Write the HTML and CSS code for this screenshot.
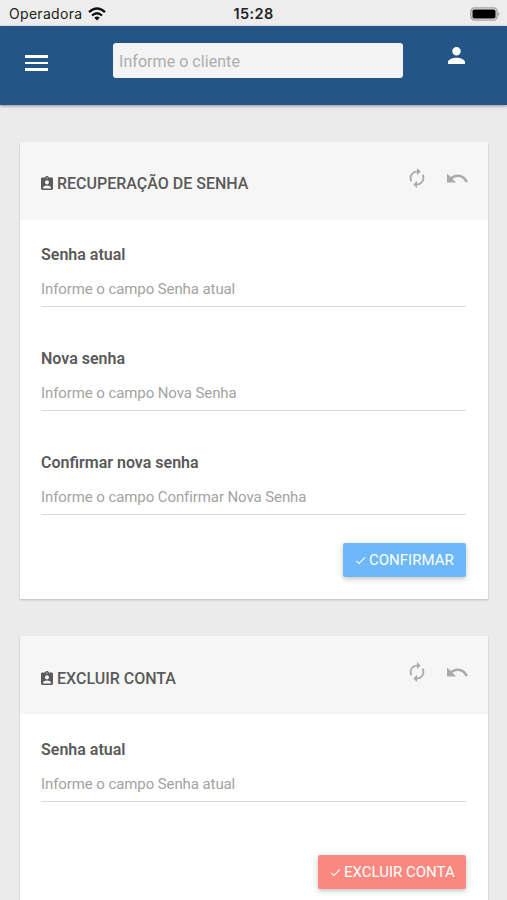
FILE: index.html
```html
<!DOCTYPE html>
<html lang="pt-BR">
<head>
<meta charset="utf-8">
<title>Recuperação de senha</title>
<link rel="stylesheet" href="styles.css">
</head>
<body>
<svg width="0" height="0" class="defs">
  <symbol id="badge" viewBox="3 1 18 20" preserveAspectRatio="none"><path d="M19 3h-4.180C14.400 1.840 13.300 1 12 1s-2.400.84-2.820 2H5c-1.100 0-2 .9-2 2v14c0 1.100.9 2 2 2h14c1.100 0 2-.9 2-2V5c0-1.100-.9-2-2-2zm-7 0c.55 0 1 .45 1 1s-.45 1-1 1-1-.45-1-1 .45-1 1-1zm0 4c1.660 0 3 1.340 3 3s-1.340 3-3 3-3-1.340-3-3 1.340-3 3-3zm6 12H6v-1.400c0-2 4-3.100 6-3.100s6 1.100 6 3.100V19z"/></symbol>
  <symbol id="renew" viewBox="0 0 24 24"><path d="M12 6v3l4-4-4-4v3c-4.420 0-8 3.580-8 8 0 1.570.46 3.030 1.240 4.260L6.700 14.800c-.45-.83-.7-1.790-.7-2.800 0-3.310 2.690-6 6-6zm6.760 1.740L17.300 9.200c.44.840.7 1.790.7 2.800 0 3.310-2.690 6-6 6v-3l-4 4 4 4v-3c4.420 0 8-3.580 8-8 0-1.570-.46-3.030-1.240-4.260z"/></symbol>
  <symbol id="undo" viewBox="2 7 20.500 9"><path d="M12.500 8c-2.650 0-5.050.99-6.900 2.600L2 7v9h9l-3.620-3.620c1.390-1.160 3.160-1.880 5.120-1.880 3.540 0 6.550 2.310 7.600 5.500l2.370-.78C21.080 11.030 17.150 8 12.500 8z"/></symbol>
  <symbol id="check" viewBox="0 0 24 24"><path d="M9 16.170 4.830 12l-1.420 1.410L9 19 21 7l-1.410-1.410z"/></symbol>
</svg>

<div class="status">
  <div class="carrier"><span>Operadora</span>
    <svg class="wifi" viewBox="0 0 18 14" fill="none" stroke="#111" stroke-width="2.300"><path d="M1 5.200Q9-2.200 17 5.200M4 8.500Q9 4 14 8.500"/><path d="M9 13.500 6.200 10.700Q9 8.400 11.800 10.700z" fill="#111" stroke="none"/></svg>
  </div>
  <span class="time">15:28</span>
  <svg class="battery" viewBox="0 0 30 14"><rect x=".9" y=".9" width="26.200" height="12.200" rx="3.500" fill="#e4e4e4" stroke="#a3a3a3" stroke-width="1.400"/><rect x="2.500" y="2.500" width="23" height="9" rx="1.800" fill="#000"/><path d="M28.300 4.800q2.400 2.200 0 4.400z" fill="#a3a3a3"/></svg>
</div>

<header class="topbar">
  <div class="burger"><i></i><i></i><i></i></div>
  <div class="search">Informe o cliente</div>
  <svg class="user" viewBox="4 4 16 16"><path d="M12 12c2.210 0 4-1.790 4-4s-1.790-4-4-4-4 1.790-4 4 1.790 4 4 4zm0 2c-2.670 0-8 1.340-8 4v2h16v-2c0-2.660-5.330-4-8-4z"/></svg>
</header>

<main>
  <section class="card">
    <div class="card-head">
      <svg class="badge"><use href="#badge"/></svg>
      <h2>RECUPERAÇÃO DE SENHA</h2>
      <div class="actions"><svg class="renew"><use href="#renew"/></svg><svg class="undo"><use href="#undo"/></svg></div>
    </div>
    <div class="card-body">
      <div class="field"><label>Senha atual</label><div class="input">Informe o campo Senha atual</div></div>
      <div class="field"><label>Nova senha</label><div class="input">Informe o campo Nova Senha</div></div>
      <div class="field"><label>Confirmar nova senha</label><div class="input">Informe o campo Confirmar Nova Senha</div></div>
      <div class="btn confirm"><svg><use href="#check"/></svg><span>CONFIRMAR</span></div>
    </div>
  </section>

  <section class="card danger">
    <div class="card-head">
      <svg class="badge"><use href="#badge"/></svg>
      <h2>EXCLUIR CONTA</h2>
      <div class="actions"><svg class="renew"><use href="#renew"/></svg><svg class="undo"><use href="#undo"/></svg></div>
    </div>
    <div class="card-body">
      <div class="field"><label>Senha atual</label><div class="input">Informe o campo Senha atual</div></div>
      <div class="btn remove"><svg><use href="#check"/></svg><span>EXCLUIR CONTA</span></div>
    </div>
  </section>
</main>
</body>
</html>
```
FILE: styles.css
```css
* { box-sizing: border-box; }
html { height: 900px; overflow: hidden; }
body {
  margin: 0;
  height: 900px;
  overflow: hidden;
  background: #ebebeb;
  font-family: Roboto, "Liberation Sans", sans-serif;
  color: #5a5a5a;
}
.defs { display: block; }
svg { fill: currentColor; flex: none; }

.status {
  display: grid;
  grid-template-columns: 1fr auto 1fr;
  align-items: center;
  height: 26px;
  padding: 1px 7px 0 9px;
  background: #ededed;
  color: #222;
  font-family: Inter, sans-serif;
  font-size: 14px;
}
.carrier { display: flex; align-items: center; gap: 6px; letter-spacing: 0.300px; }
.wifi { width: 18px; height: 14px; fill: none; }
.time { font-weight: 600; font-size: 14.500px; letter-spacing: 0.400px; margin-left: -2px; }
.battery { width: 30px; height: 14px; justify-self: end; }

.topbar {
  display: flex;
  align-items: flex-start;
  height: 79px;
  padding: 17px 42px 0 25px;
  background: #235686;
  box-shadow: 0 1px 3px rgba(0, 0, 0, 0.400);
}
.burger { display: flex; flex-direction: column; gap: 4px; width: 23px; margin-top: 12px; }
.burger i { height: 2.500px; background: #fff; }
.search {
  width: 290px;
  height: 35px;
  margin-left: 65px;
  padding-left: 6px;
  border-radius: 3px;
  background: #f4f4f4;
  color: #adadad;
  font-size: 16px;
  letter-spacing: 0.050px;
  line-height: 37px;
}
.user { width: 17px; height: 17px; margin: 4px 0 0 auto; color: #fff; }

main { display: flex; flex-direction: column; gap: 37px; padding: 37px 19px 0 20px; }
.card { background: #fff; box-shadow: 0 1px 2px rgba(0, 0, 0, 0.200); }
.card-head {
  display: flex;
  align-items: center;
  height: 78px;
  padding: 6px 20px 0 21px;
  background: #f6f6f6;
}
.badge { width: 12px; height: 14px; margin-right: 4px; margin-top: -3px; }
h2 { margin: 0; font-size: 16px; font-weight: 500; line-height: 20px; }
.actions { display: flex; align-items: center; gap: 19px; margin: -13px 0 0 auto; color: #aaa; }
.renew { width: 22px; height: 22px; }
.undo { width: 21px; height: 10px; }

.card-body { padding: 23px 22px 22px 21px; display: flex; flex-direction: column; }
.field { height: 64px; margin-bottom: 40px; padding-top: 1px; border-bottom: 1px solid #d8d8d8; }
label { display: block; font-size: 16px; font-weight: 600; line-height: 22px; }
.input { margin-top: 12px; font-size: 15px; line-height: 22px; letter-spacing: -0.090px; color: #a3a3a3; }
.btn {
  display: flex;
  align-items: center;
  align-self: flex-end;
  height: 34px;
  padding: 0 0 0 11px;
  border-radius: 2px;
  color: #fff;
  font-size: 15px;
  white-space: nowrap;
  box-shadow: 0 2px 5px rgba(0, 0, 0, 0.240);
}
.btn svg { width: 13px; height: 13px; margin-right: 2px; }
.confirm { width: 123px; margin-top: -12px; background: #6cb8f9; }
.remove { width: 148px; margin-top: 13px; background: #f98880; }

.danger .card-head { padding-top: 8px; }
.danger .actions { margin-top: -15px; }
.danger .card-body { padding-top: 24px; }
```
